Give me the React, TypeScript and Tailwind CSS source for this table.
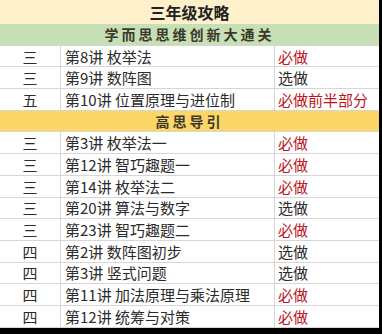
const CJK = "font-['Noto_Sans_CJK_SC','Noto_Sans',sans-serif]";

type Row = { level: string; lesson: string; note: string; must: boolean };

const SECTION_A: Row[] = [
  { level: "三", lesson: "第8讲 枚举法", note: "必做", must: true },
  { level: "三", lesson: "第9讲 数阵图", note: "选做", must: false },
  { level: "五", lesson: "第10讲 位置原理与进位制", note: "必做前半部分", must: true },
];

const SECTION_B: Row[] = [
  { level: "三", lesson: "第3讲 枚举法一", note: "必做", must: true },
  { level: "三", lesson: "第12讲 智巧趣题一", note: "必做", must: true },
  { level: "三", lesson: "第14讲 枚举法二", note: "必做", must: true },
  { level: "三", lesson: "第20讲 算法与数字", note: "选做", must: false },
  { level: "三", lesson: "第23讲 智巧趣题二", note: "必做", must: true },
  { level: "四", lesson: "第2讲 数阵图初步", note: "选做", must: false },
  { level: "四", lesson: "第3讲 竖式问题", note: "选做", must: false },
  { level: "四", lesson: "第11讲 加法原理与乘法原理", note: "必做", must: true },
  { level: "四", lesson: "第12讲 统筹与对策", note: "必做", must: true },
];

function DataRow({ row }: { row: Row }) {
  return (
    <div className="grid h-[21.7px] grid-cols-[61px_214px_1fr] border-b border-[#d6d6d6] bg-white text-[15px] leading-none text-[#2b2b2b]">
      <div className="flex items-center justify-center border-r border-[#d6d6d6]">{row.level}</div>
      <div className="flex items-center border-r border-[#d6d6d6] pl-[4px] whitespace-nowrap">{row.lesson}</div>
      <div className={`flex items-center pl-[3px] whitespace-nowrap ${row.must ? "text-[#c0141c]" : ""}`}>
        {row.note}
      </div>
    </div>
  );
}

function SectionHeader({ label, bg }: { label: string; bg: string }) {
  return (
    <div
      className={`flex h-[21.7px] items-center justify-center border-b border-[#d6d6d6] text-[14px] font-bold leading-none tracking-[3px] text-[#3a3a2a] ${bg}`}
    >
      {label}
    </div>
  );
}

export default function App() {
  return (
    <div className={`h-[334px] w-[382px] overflow-hidden bg-black ${CJK}`}>
      <div className="w-[379px]">
        <div className="flex h-[24px] items-center justify-center bg-[#fdf0cb] text-[16px] font-bold leading-none text-[#222]">
          三年级攻略
        </div>
        <SectionHeader label="学而思思维创新大通关" bg="bg-[#c6dfb5]" />
        {SECTION_A.map((r, i) => (
          <DataRow key={i} row={r} />
        ))}
        <SectionHeader label="高思导引" bg="bg-[#fdd668]" />
        {SECTION_B.map((r, i) => (
          <DataRow key={i} row={r} />
        ))}
      </div>
    </div>
  );
}
